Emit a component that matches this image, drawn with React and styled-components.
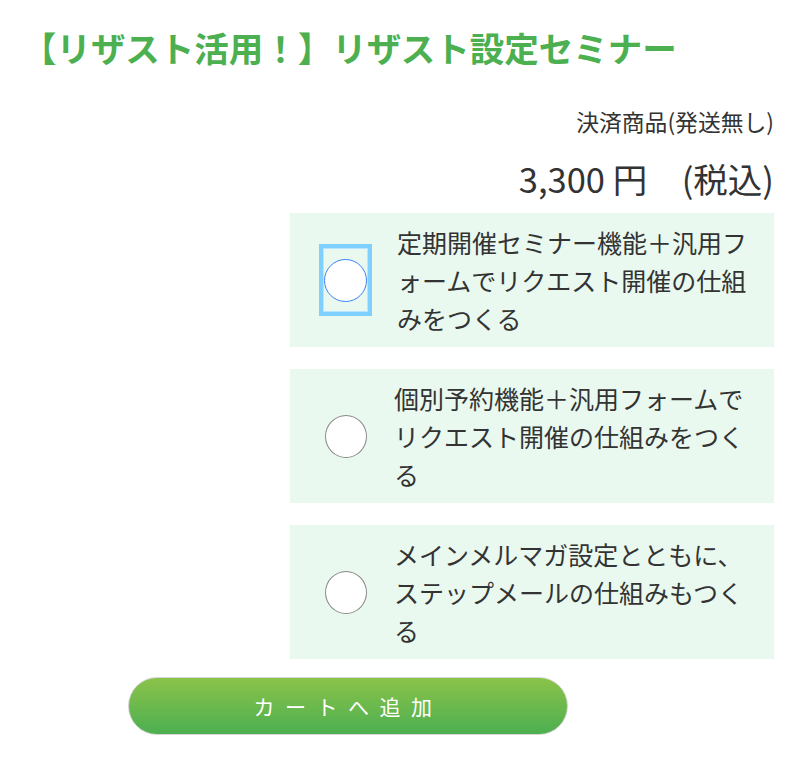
import styled, { createGlobalStyle } from "styled-components";

const GlobalStyle = createGlobalStyle`
  body {
    margin: 0;
    background: #fff;
    font-family: "Noto Sans CJK JP", "Noto Sans", sans-serif;
    color: #333;
  }
`;

const options = [
  { id: 1, label: "定期開催セミナー機能＋汎用フォームでリクエスト開催の仕組みをつくる", focused: true },
  { id: 2, label: "個別予約機能＋汎用フォームでリクエスト開催の仕組みをつくる" },
  { id: 3, label: "メインメルマガ設定とともに、ステップメールの仕組みもつくる" },
];

const App = () => {
  return (
    <Page>
      <GlobalStyle />
      <Title>【リザスト活用！】リザスト設定セミナー</Title>
      <Kind>決済商品(発送無し)</Kind>
      <Price>3,300 円　(税込)</Price>
      <OptionList>
        {options.map((o) => (
          <Option key={o.id}>
            <RadioWrap $focused={o.focused}>
              <Radio $focused={o.focused} />
            </RadioWrap>
            <OptionText>{o.label}</OptionText>
          </Option>
        ))}
      </OptionList>
      <CartButton>カートへ追加</CartButton>
    </Page>
  );
};

const Page = styled.div`
  padding: 24px 26px 30px 26px;
  display: flex;
  flex-direction: column;
`;

const Title = styled.h1`
  margin: 0 0 0 -4px;
  font-size: 34.5px;
  font-weight: 700;
  line-height: 46px;
  color: #4caf50;
`;

const Kind = styled.div`
  margin-top: 37px;
  text-align: right;
  font-size: 22.8px;
  line-height: 30px;
`;

const Price = styled.div`
  margin-top: 21px;
  text-align: right;
  font-size: 34.5px;
  line-height: 40px;
`;

const OptionList = styled.div`
  margin-top: 15px;
  margin-left: 264px;
  display: flex;
  flex-direction: column;
  gap: 22px;
`;

const Option = styled.label`
  display: flex;
  align-items: center;
  gap: 27px;
  background: #e9f9ef;
  padding: 10px 22px 10px 35px;
  min-height: 114px;
`;

const RadioWrap = styled.span`
  flex: none;
  display: flex;
  align-items: center;
  justify-content: center;
  width: ${(p) => (p.$focused ? "45px" : "42px")};
  height: ${(p) => (p.$focused ? "64px" : "42px")};
  margin: ${(p) => (p.$focused ? "0 -2px 0 -6px" : "0")};
  border: ${(p) => (p.$focused ? "4px solid #7fd0ff" : "none")};
  box-shadow: ${(p) => (p.$focused ? "inset 0 0 0 1px #b8e6ff" : "none")};
`;

const Radio = styled.span`
  display: block;
  width: 43px;
  height: 43px;
  box-sizing: border-box;
  border-radius: 50%;
  background: #fff;
  border: 1px solid ${(p) => (p.$focused ? "#3b82f6" : "#8a8a8a")};
`;

const OptionText = styled.span`
  font-size: 25px;
  line-height: 38px;
  color: #333;
`;

const CartButton = styled.button`
  margin-top: 18px;
  margin-left: 102px;
  width: 440px;
  height: 58px;
  border-radius: 29px;
  border: 1px solid #d6d6d6;
  background: linear-gradient(to bottom, #8bc34a, #4caf50);
  color: #fff;
  font-family: "Noto Sans CJK JP", "Noto Sans", sans-serif;
  font-size: 21px;
  letter-spacing: 0.5em;
  padding: 0 0 0 0;
  cursor: pointer;
`;

export default App;
